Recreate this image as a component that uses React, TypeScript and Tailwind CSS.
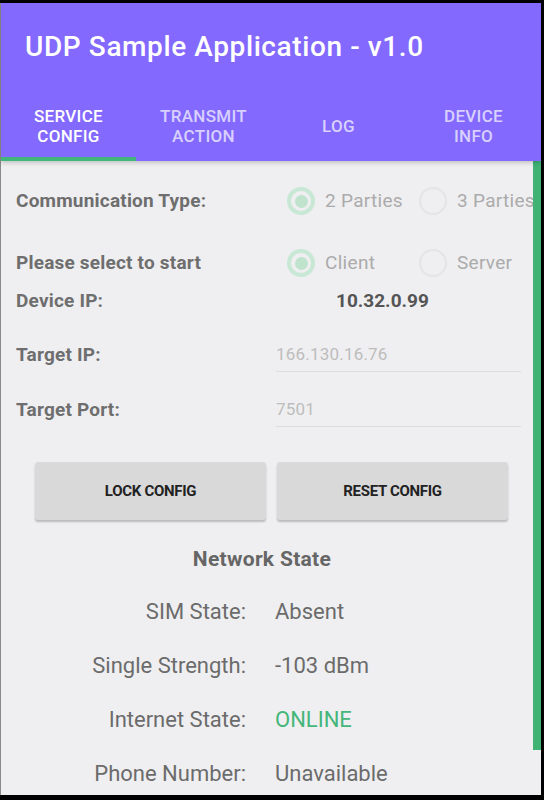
const tabs = [
  { id: 1, label: ["SERVICE", "CONFIG"], active: true },
  { id: 2, label: ["TRANSMIT", "ACTION"], active: false },
  { id: 3, label: ["LOG"], active: false },
  { id: 4, label: ["DEVICE", "INFO"], active: false },
];

const networkRows = [
  { id: 1, label: "SIM State:", value: "Absent", green: false },
  { id: 2, label: "Single Strength:", value: "-103 dBm", green: false },
  { id: 3, label: "Internet State:", value: "ONLINE", green: true },
  { id: 4, label: "Phone Number:", value: "Unavailable", green: false },
];

const Radio = ({ checked, label }: { checked: boolean; label: string }) => (
  <div className="flex items-center gap-[10px]">
    {checked ? (
      <span className="w-[28px] h-[28px] rounded-full border-[4px] border-[#c8e8d5] flex items-center justify-center">
        <span className="w-[13px] h-[13px] rounded-full bg-[#bfe3cd]" />
      </span>
    ) : (
      <span className="w-[28px] h-[28px] rounded-full border-[2px] border-[#e4e4e6]" />
    )}
    <span className="text-[19px] tracking-[0.3px] text-[#ababab] whitespace-nowrap">{label}</span>
  </div>
);

const App = () => {
  return (
    <div
      className="w-[544px] h-[800px] bg-black pt-[3px] pb-[5px] overflow-hidden"
      style={{ fontFamily: "Roboto, 'Liberation Sans', sans-serif" }}
    >
      <div className="h-full w-[541px] border-l border-[#8a8a8a] bg-[#efeff1] flex flex-col">
        {/* App bar + tabs */}
        <div className="bg-[#8369fd] shadow-[0_2px_4px_rgba(0,0,0,0.18)] z-10">
          <div className="h-[92px] flex items-center pl-[24px] pb-[4px]">
            <h1 className="text-white text-[28px] font-medium tracking-[0.6px]">
              UDP Sample Application - v1.0
            </h1>
          </div>
          <div className="grid grid-cols-4 h-[66px]">
            {tabs.map((tab) => (
              <div key={tab.id} className="flex flex-col">
                <div
                  className={`flex-1 flex flex-col items-center justify-center text-[17px] tracking-[0.3px] font-medium leading-[20px] ${
                    tab.active ? "text-white" : "text-white/70"
                  }`}
                >
                  {tab.label.map((l) => (
                    <span key={l}>{l}</span>
                  ))}
                </div>
                <div className={`h-[4px] ${tab.active ? "bg-[#41b57a]" : ""}`} />
              </div>
            ))}
          </div>
        </div>

        {/* Body */}
        <div className="flex-1 flex min-h-0">
          <div className="flex-1 overflow-hidden pl-[15px]">
            <div className="h-[40px] mt-[20px] flex items-center">
              <p className="w-[271px] shrink-0 text-[19px] tracking-[0.2px] font-bold text-[#6e6e6e]">
                Communication Type:
              </p>
              <div className="flex gap-[14px]">
                <div className="w-[118px]">
                  <Radio checked label="2 Parties" />
                </div>
                <Radio checked={false} label="3 Parties" />
              </div>
            </div>

            <div className="h-[40px] mt-[22px] flex items-center">
              <p className="w-[271px] shrink-0 text-[19px] tracking-[0.2px] font-bold text-[#6e6e6e]">
                Please select to start
              </p>
              <div className="flex gap-[14px]">
                <div className="w-[118px]">
                  <Radio checked label="Client" />
                </div>
                <Radio checked={false} label="Server" />
              </div>
            </div>

            <div className="h-[24px] mt-[6px] flex items-center">
              <p className="w-[320px] shrink-0 text-[19px] tracking-[0.2px] font-bold text-[#6e6e6e]">
                Device IP:
              </p>
              <p className="text-[19px] font-bold text-[#555555]">10.32.0.99</p>
            </div>

            <div className="h-[38px] mt-[21px] flex">
              <p className="w-[260px] shrink-0 text-[19px] tracking-[0.2px] font-bold text-[#6e6e6e] pt-[7px]">
                Target IP:
              </p>
              <div className="w-[245px] border-b border-[#dcdcde] pt-[8px] text-[17px] tracking-[0.2px] text-[#bdbdbd]">
                166.130.16.76
              </div>
            </div>

            <div className="h-[38px] mt-[17px] flex">
              <p className="w-[260px] shrink-0 text-[19px] tracking-[0.2px] font-bold text-[#6e6e6e] pt-[7px]">
                Target Port:
              </p>
              <div className="w-[245px] border-b border-[#dcdcde] pt-[8px] text-[17px] tracking-[0.2px] text-[#bdbdbd]">
                7501
              </div>
            </div>

            <div className="flex gap-[11px] mt-[35px] pl-[19px]">
              {["LOCK CONFIG", "RESET CONFIG"].map((b) => (
                <button
                  key={b}
                  className="w-[231px] h-[58px] rounded-[3px] bg-[#d9d9da] shadow-[0_2px_2px_rgba(0,0,0,0.22)] text-[15px] font-bold text-[#222222] tracking-[-0.3px]"
                >
                  {b}
                </button>
              ))}
            </div>

            <h2 className="mt-[24px] w-[492px] text-center text-[21px] tracking-[0.3px] font-bold text-[#666666] leading-[30px]">
              Network State
            </h2>

            <div className="flex flex-col gap-[24px] mt-[22px]">
              {networkRows.map((row) => (
                <div key={row.id} className="flex items-center h-[30px] text-[22px]">
                  <span className="w-[230px] shrink-0 text-right text-[#6b6b6b]">{row.label}</span>
                  <span className={`ml-[29px] ${row.green ? "text-[#45b679]" : "text-[#6b6b6b]"}`}>
                    {row.value}
                  </span>
                </div>
              ))}
            </div>
          </div>

          {/* scroll indicator */}
          <div className="w-[8px] shrink-0">
            <div className="h-[589px] bg-[#3fb274]" />
          </div>
        </div>
      </div>
    </div>
  );
};

export default App;
